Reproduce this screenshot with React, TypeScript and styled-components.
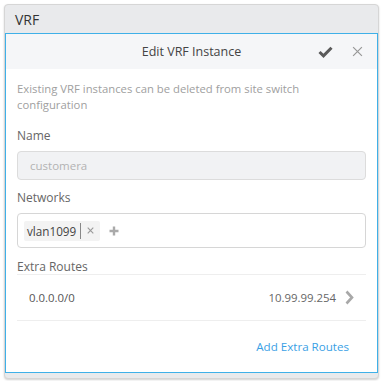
import { createGlobalStyle, styled } from "styled-components";

const GlobalStyle = createGlobalStyle`
  html, body { margin: 0; padding: 0; background: #ffffff; }
  body { padding: 4px; font-family: "Open Sans", "Noto Sans", sans-serif; }
  * { box-sizing: border-box; }
`;

const Card = styled.div`
  width: 375px;
  height: 375px;
  border: 1px solid #d6d6d6;
  border-radius: 4px;
  background: #e9eaec;
  box-shadow: 0 1px 2px rgba(0, 0, 0, 0.18);
  display: flex;
  flex-direction: column;
  overflow: hidden;
`;

const CardTitle = styled.div`
  height: 28px;
  padding: 0 10px;
  display: flex;
  align-items: center;
  font-size: 14px;
  color: #333;
`;

const Panel = styled.div`
  height: 340px;
  border: 1px solid #3fb0e8;
  background: #fff;
  display: flex;
  flex-direction: column;
`;

const PanelHeader = styled.div`
  height: 35px;
  background: #f5f6f8;
  position: relative;
  display: flex;
  align-items: center;
  justify-content: center;
  font-size: 12.5px;
  color: #444;
`;

const HeaderActions = styled.div`
  position: absolute;
  right: 12px;
  top: 0;
  bottom: 0;
  display: flex;
  align-items: center;
  gap: 16px;
`;

const IconButton = styled.span`
  display: flex;
  align-items: center;
  justify-content: center;
  width: 16px;
  height: 16px;
`;

const Body = styled.div`
  padding: 12px 11px 0 11px;
  display: flex;
  flex-direction: column;
`;

const Hint = styled.div`
  font-size: 11.3px;
  line-height: 16px;
  color: #a0a0a0;
`;

const Label = styled.div<{ $top: number }>`
  margin-top: ${(p) => p.$top}px;
  font-size: 12px;
  line-height: 16px;
  color: #666;
`;

const TextInput = styled.div`
  margin-top: 7px;
  height: 29px;
  border: 1px solid #dcdcdc;
  border-radius: 4px;
  background: #f1f2f4;
  padding: 0 12px;
  display: flex;
  align-items: center;
  font-size: 11.5px;
  color: #b3b3b3;
`;

const TagBox = styled.div`
  margin-top: 7px;
  height: 35px;
  border: 1px solid #d6d6d6;
  border-radius: 4px;
  background: #fff;
  padding: 0 6px;
  display: flex;
  align-items: center;
  gap: 9px;
`;

const Tag = styled.div`
  height: 20px;
  background: #f3f3f3;
  border-radius: 2px;
  display: flex;
  align-items: center;
  font-size: 11.7px;
  color: #444;
`;

const TagText = styled.span`
  padding: 0 4px 0 3px;
  border-right: 1px solid #888;
  line-height: 16px;
`;

const TagRemove = styled.span`
  width: 19px;
  display: flex;
  align-items: center;
  justify-content: center;
`;

const RouteList = styled.div`
  margin-top: -1px;
  border-top: 1px solid #eeeeee;
`;

const RouteRow = styled.div`
  height: 46px;
  border-bottom: 1px solid #eeeeee;
  display: flex;
  align-items: center;
  padding: 0 12px;
  font-size: 11.4px;
  color: #555;
`;

const RouteRight = styled.span`
  margin-left: auto;
  display: flex;
  align-items: center;
  gap: 9px;
  color: #666;
`;

const Footer = styled.div`
  display: flex;
  justify-content: flex-end;
  padding: 18px 17px 0 0;
`;

const LinkButton = styled.span`
  font-size: 11.6px;
  color: #3a9fe5;
  line-height: 16px;
`;

const CheckIcon = () => (
  <svg width="15" height="12" viewBox="0 0 15 12">
    <path d="M1.5 6 L5.5 9.8 L13.5 1.8" fill="none" stroke="#5a5a5a" strokeWidth="3" />
  </svg>
);

const CloseIcon = ({ size, color, width }: { size: number; color: string; width: number }) => (
  <svg width={size} height={size} viewBox="0 0 10 10">
    <path d="M1 1 L9 9 M9 1 L1 9" stroke={color} strokeWidth={width} fill="none" />
  </svg>
);

const PlusIcon = () => (
  <svg width="10" height="10" viewBox="0 0 10 10">
    <path d="M5 0.5 V9.5 M0.5 5 H9.5" stroke="#aaa" strokeWidth="2.4" />
  </svg>
);

const Chevron = () => (
  <svg width="9" height="15" viewBox="0 0 9 15">
    <path d="M1.5 1.5 L7 7.5 L1.5 13.5" fill="none" stroke="#a8a8a8" strokeWidth="2.6" />
  </svg>
);

export default function App() {
  return (
    <>
      <GlobalStyle />
      <Card>
        <CardTitle>VRF</CardTitle>
        <Panel>
          <PanelHeader>
            Edit VRF Instance
            <HeaderActions>
              <IconButton>
                <CheckIcon />
              </IconButton>
              <IconButton>
                <CloseIcon size={11} color="#999" width={1.1} />
              </IconButton>
            </HeaderActions>
          </PanelHeader>
          <Body>
            <Hint>
              Existing VRF instances can be deleted from site switch
              <br />
              configuration
            </Hint>
            <Label $top={15}>Name</Label>
            <TextInput>customera</TextInput>
            <Label $top={10}>Networks</Label>
            <TagBox>
              <Tag>
                <TagText>vlan1099</TagText>
                <TagRemove>
                  <CloseIcon size={7} color="#999" width={1.6} />
                </TagRemove>
              </Tag>
              <PlusIcon />
            </TagBox>
            <Label $top={11}>Extra Routes</Label>
            <RouteList>
              <RouteRow>
                0.0.0.0/0
                <RouteRight>
                  10.99.99.254
                  <Chevron />
                </RouteRight>
              </RouteRow>
            </RouteList>
            <Footer>
              <LinkButton>Add Extra Routes</LinkButton>
            </Footer>
          </Body>
        </Panel>
      </Card>
    </>
  );
}
